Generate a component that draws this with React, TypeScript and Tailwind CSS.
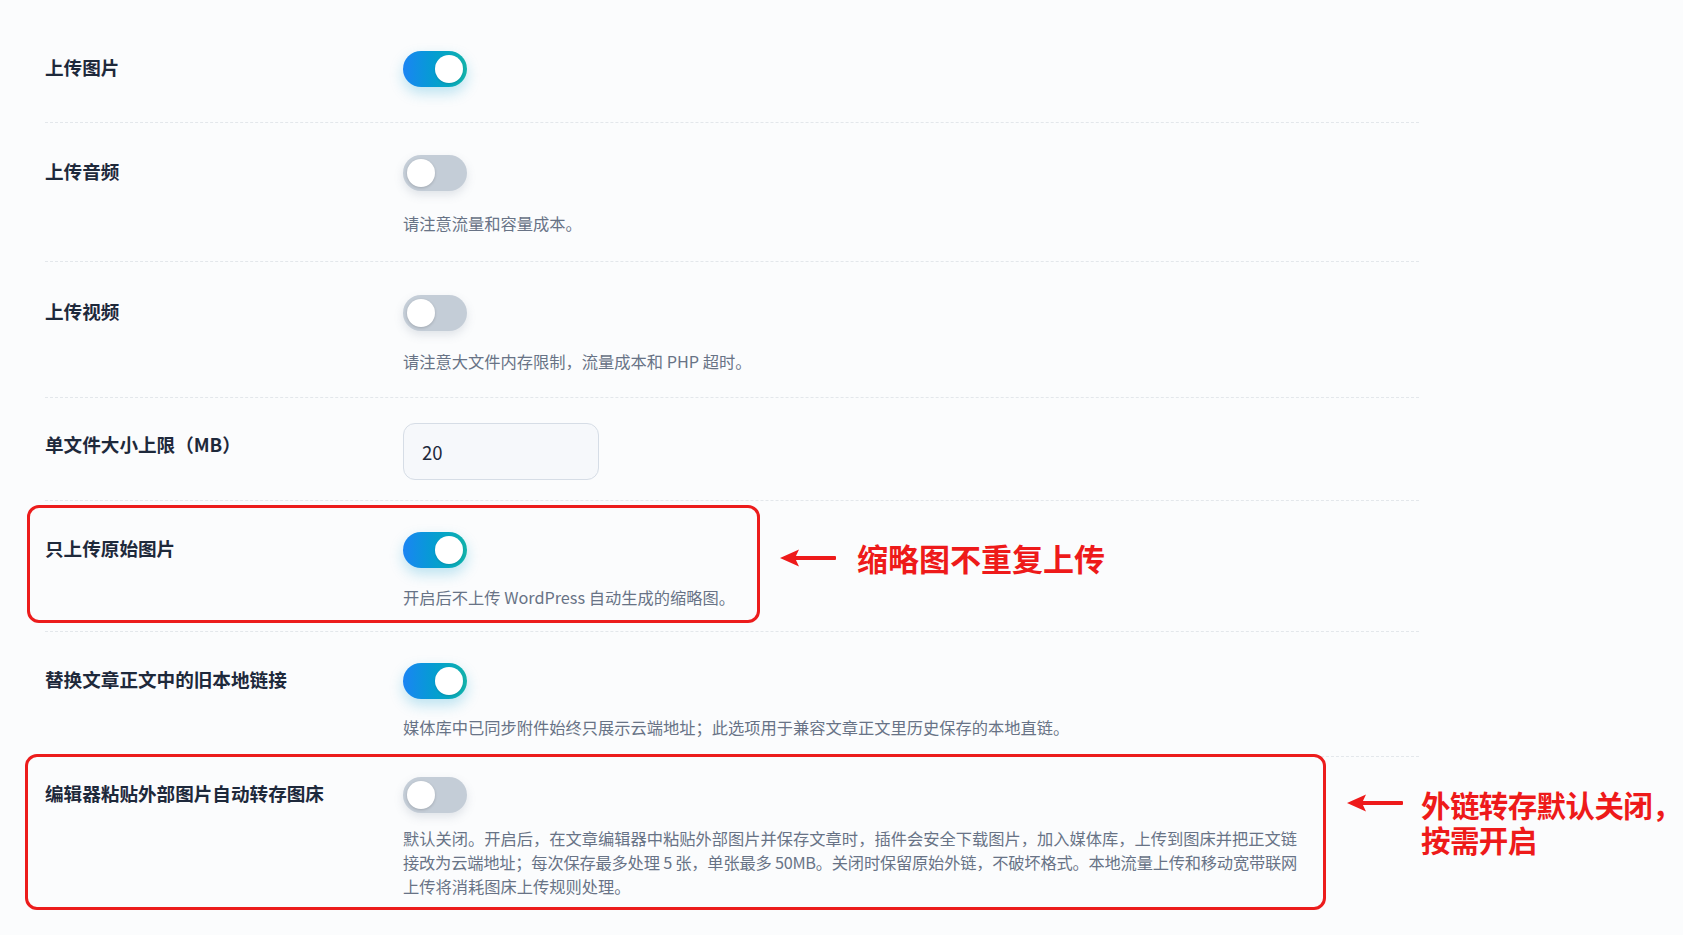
import React from "react";

// Settings list: upload toggles, size limit and link handling options.

function Toggle({ on }: { on: boolean }) {
  return on ? (
    <div className="relative h-9 w-16 shrink-0 rounded-full bg-linear-to-r from-[#1b84f3] to-[#12b2aa] shadow-[0_6px_14px_rgba(20,160,210,0.28)]">
      <div className="absolute left-[32px] top-1 h-7 w-7 rounded-full bg-white shadow-[0_1px_2px_rgba(0,0,0,0.12)]" />
    </div>
  ) : (
    <div className="relative h-9 w-16 shrink-0 rounded-full bg-[#c4cdd7] shadow-[0_4px_10px_rgba(100,116,139,0.18)]">
      <div className="absolute left-1 top-1 h-7 w-7 rounded-full bg-white shadow-[0_1px_3px_rgba(0,0,0,0.18)]" />
    </div>
  );
}

function Label({ children, extra = "" }: { children: React.ReactNode; extra?: string }) {
  return (
    <div className={`flex h-9 w-[358px] shrink-0 items-center pb-[4px] text-[18.6px] font-bold leading-none text-[#1e293b] ${extra}`}>
      {children}
    </div>
  );
}

function Desc({ children, extra = "" }: { children: React.ReactNode; extra?: string }) {
  return <div className={`text-[16.25px] leading-6 text-[#687386] ${extra}`}>{children}</div>;
}

function Arrow() {
  return (
    <svg width="56" height="20" viewBox="0 0 56 20" className="shrink-0">
      <rect x="12" y="8" width="44" height="4" rx="1" fill="#ee1a1a" />
      <path d="M0 10 L19 1.5 L15 10 L19 18.5 Z" fill="#ee1a1a" />
    </svg>
  );
}

export default function App() {
  return (
    <div className="min-h-screen w-full overflow-hidden bg-[#fbfcfd] font-['Noto_Sans_CJK_SC','Noto_Sans',sans-serif]">
      <div className="ml-[45px] w-[1374px]">
        {/* 上传图片 */}
        <div className="flex border-b border-dashed border-[#e3e7eb] pt-[51px] pb-[35px]">
          <Label>上传图片</Label>
          <Toggle on />
        </div>

        {/* 上传音频 */}
        <div className="flex border-b border-dashed border-[#e3e7eb] pt-[32px] pb-[26px]">
          <Label>上传音频</Label>
          <div className="flex flex-col">
            <Toggle on={false} />
            <Desc extra="mt-[20px]">请注意流量和容量成本。</Desc>
          </div>
        </div>

        {/* 上传视频 */}
        <div className="flex border-b border-dashed border-[#e3e7eb] pt-[33px] pb-[24px]">
          <Label>上传视频</Label>
          <div className="flex flex-col">
            <Toggle on={false} />
            <Desc extra="mt-[18px]">请注意大文件内存限制，流量成本和 PHP 超时。</Desc>
          </div>
        </div>

        {/* 单文件大小上限 */}
        <div className="flex border-b border-dashed border-[#e3e7eb] pt-[25px] pb-[20px]">
          <Label extra="mt-[5px]">单文件大小上限（MB）</Label>
          <input
            defaultValue="20"
            className="h-[57px] w-[196px] rounded-xl border border-[#d6dde6] bg-[#f6f8fb] pl-[18px] text-[18.5px] text-[#1e293b] outline-none"
          />
        </div>

        {/* 只上传原始图片 */}
        <div className="relative flex border-b border-dashed border-[#e3e7eb] pt-[31px] pb-[22px]">
          <Label>只上传原始图片</Label>
          <div className="flex flex-col">
            <Toggle on />
            <Desc extra="mt-[17px]">开启后不上传 WordPress 自动生成的缩略图。</Desc>
          </div>
          <div className="pointer-events-none absolute left-[-18px] top-[4px] h-[118px] w-[733px] rounded-xl border-[3px] border-[#ec1c1c]" />
          <div className="pointer-events-none absolute left-[735px] top-[47px] flex items-center gap-[21px] whitespace-nowrap">
            <Arrow />
            <span className="text-[31px] font-bold leading-[20px] text-[#ee1a1a]">缩略图不重复上传</span>
          </div>
        </div>

        {/* 替换文章正文中的旧本地链接 */}
        <div className="flex border-b border-dashed border-[#e3e7eb] pt-[31px] pb-[17px]">
          <Label>替换文章正文中的旧本地链接</Label>
          <div className="flex flex-col">
            <Toggle on />
            <Desc extra="mt-[16px]">媒体库中已同步附件始终只展示云端地址；此选项用于兼容文章正文里历史保存的本地直链。</Desc>
          </div>
        </div>

        {/* 编辑器粘贴外部图片自动转存图床 */}
        <div className="relative flex pt-[20px] pb-[12px]">
          <Label>编辑器粘贴外部图片自动转存图床</Label>
          <div className="flex flex-col">
            <Toggle on={false} />
            <div className="mt-[13px] w-[894px]">
              <Desc extra="whitespace-nowrap text-justify [text-align-last:justify]">
                默认关闭。开启后，在文章编辑器中粘贴外部图片并保存文章时，插件会安全下载图片，加入媒体库，上传到图床并把正文链
              </Desc>
              <Desc extra="whitespace-nowrap text-justify tracking-[-0.3px] [text-align-last:justify]">
                接改为云端地址；每次保存最多处理 5 张，单张最多 50MB。关闭时保留原始外链，不破坏格式。本地流量上传和移动宽带联网
              </Desc>
              <Desc>上传将消耗图床上传规则处理。</Desc>
            </div>
          </div>
          <div className="pointer-events-none absolute left-[-20px] top-[-3px] h-[156px] w-[1301px] rounded-xl border-[3px] border-[#ec1c1c]" />
          <div className="pointer-events-none absolute left-[1302px] top-[30px] flex items-start gap-[18px] whitespace-nowrap">
            <div className="mt-[6px]">
              <Arrow />
            </div>
            <div className="text-[29.5px] font-bold leading-[35px] tracking-[-0.6px] text-[#ee1a1a]">
              外链转存默认关闭，
              <br />
              按需开启
            </div>
          </div>
        </div>
      </div>
    </div>
  );
}
